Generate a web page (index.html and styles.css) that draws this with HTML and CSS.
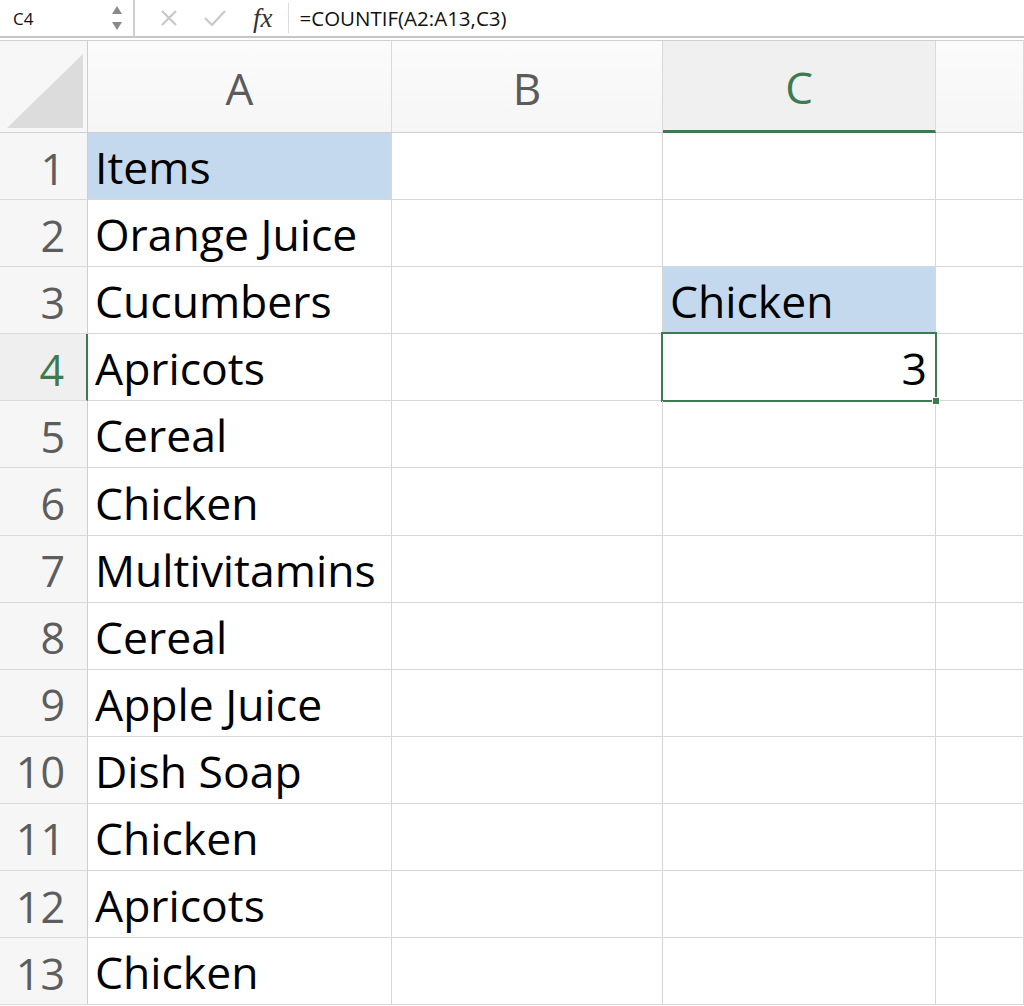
FILE: index.html
```html
<!DOCTYPE html>
<html>
<head>
<meta charset="utf-8">
<link rel="stylesheet" href="styles.css">
</head>
<body>
<div class="formula-bar">
  <div class="name-box">
    <span class="name">C4</span>
    <span class="spin">
      <svg width="12" height="30" viewBox="0 0 12 30"><path d="M6 3 L11 11 L1 11 Z" fill="#8a8a8a"/><path d="M1 19 L11 19 L6 27 Z" fill="#8a8a8a"/></svg>
    </span>
  </div>
  <div class="fb-tools">
    <svg class="tool" width="20" height="20" viewBox="0 0 20 20"><path d="M3 3 L17 17 M17 3 L3 17" stroke="#c8c8c8" stroke-width="2.2" fill="none"/></svg>
    <svg class="tool" width="24" height="20" viewBox="0 0 24 20"><path d="M2 10 L9 17 L22 3" stroke="#c8c8c8" stroke-width="2.2" fill="none"/></svg>
    <span class="fx">fx</span>
  </div>
  <div class="formula">=COUNTIF(A2:A13,C3)</div>
</div>
<div class="gap"></div>
<div class="sheet">
  <div class="corner"><svg width="80" height="80" viewBox="0 0 80 80"><path d="M80 6 L80 80 L4 80 Z" fill="#dcdcdc"/></svg></div>
  <div class="colh">A</div>
  <div class="colh">B</div>
  <div class="colh sel">C</div>
  <div class="colh"></div>

  <div class="rowh">1</div><div class="cell hl">Items</div><div class="cell"></div><div class="cell"></div><div class="cell"></div>
  <div class="rowh">2</div><div class="cell">Orange Juice</div><div class="cell"></div><div class="cell"></div><div class="cell"></div>
  <div class="rowh">3</div><div class="cell">Cucumbers</div><div class="cell"></div><div class="cell hl">Chicken</div><div class="cell"></div>
  <div class="rowh sel">4</div><div class="cell">Apricots</div><div class="cell"></div><div class="cell num active">3<span class="handle"></span></div><div class="cell"></div>
  <div class="rowh">5</div><div class="cell">Cereal</div><div class="cell"></div><div class="cell"></div><div class="cell"></div>
  <div class="rowh">6</div><div class="cell">Chicken</div><div class="cell"></div><div class="cell"></div><div class="cell"></div>
  <div class="rowh">7</div><div class="cell">Multivitamins</div><div class="cell"></div><div class="cell"></div><div class="cell"></div>
  <div class="rowh">8</div><div class="cell">Cereal</div><div class="cell"></div><div class="cell"></div><div class="cell"></div>
  <div class="rowh">9</div><div class="cell">Apple Juice</div><div class="cell"></div><div class="cell"></div><div class="cell"></div>
  <div class="rowh">10</div><div class="cell">Dish Soap</div><div class="cell"></div><div class="cell"></div><div class="cell"></div>
  <div class="rowh">11</div><div class="cell">Chicken</div><div class="cell"></div><div class="cell"></div><div class="cell"></div>
  <div class="rowh">12</div><div class="cell">Apricots</div><div class="cell"></div><div class="cell"></div><div class="cell"></div>
  <div class="rowh">13</div><div class="cell">Chicken</div><div class="cell"></div><div class="cell"></div><div class="cell"></div>
</div>
</body>
</html>
```
FILE: styles.css
```css
* { box-sizing: border-box; }
html, body { margin: 0; padding: 0; background: #fff; overflow: hidden; }
body { width: 1024px; height: 1006px; font-family: "Open Sans", "Lato", sans-serif; }

.formula-bar {
  height: 38px;
  display: flex;
  align-items: center;
  border-bottom: 2px solid #c6c6c6;
  background: #fff;
}
.name-box {
  width: 135px;
  height: 38px;
  display: flex;
  align-items: center;
  justify-content: space-between;
  padding: 0 10px 0 13px;
  border-right: 2px solid #cfcfcf;
}
.name { font-size: 17px; color: #111; }
.spin { display: flex; align-items: center; }
.fb-tools {
  display: flex;
  align-items: center;
  gap: 24px;
  padding-left: 24px;
  height: 30px;
  padding-right: 15px;
  border-right: 1px solid #dcdcdc;
}
.fx {
  font-family: "Liberation Serif", serif;
  font-style: italic;
  font-size: 27px;
  color: #333;
  margin-left: 2px;
}
.formula {
  padding-left: 11px;
  font-size: 20.5px;
  color: #111;
}
.gap { height: 3px; border-bottom: 1px solid #d0d0d0; }

.sheet {
  display: grid;
  grid-template-columns: 88px 304px 271px 273px 88px;
  grid-template-rows: 92px repeat(13, 67.1px);
}
.corner {
  background: #f7f7f7;
  border-right: 1px solid #cfcfcf;
  border-bottom: 1px solid #cfcfcf;
  display: flex;
  align-items: flex-end;
  justify-content: flex-end;
  padding: 0 4px 4px 0;
}
.colh {
  background: linear-gradient(#fbfbfb, #f6f6f6);
  border-right: 1px solid #dadada;
  border-bottom: 1px solid #cfcfcf;
  display: flex;
  align-items: center;
  justify-content: center;
  font-size: 44px;
  color: #5b5b5b;
  padding-top: 2px;
}
.colh.sel {
  background: #f0f0f0;
  color: #3d7a4f;
  border-bottom: 3px solid #3d7a4f;
}
.rowh {
  background: #f6f6f6;
  border-right: 1px solid #cfcfcf;
  border-bottom: 1px solid #dadada;
  display: flex;
  align-items: center;
  justify-content: flex-end;
  padding-right: 22px;
  font-size: 43px;
  color: #5d5d5d;
  padding-top: 4px;
}
.rowh.sel {
  background: #efefef;
  color: #3d7a4f;
  border-right: 2px solid #3d7a4f;
}
.cell {
  border-right: 1px solid #d6d6d6;
  border-bottom: 1px solid #d6d6d6;
  display: flex;
  align-items: center;
  padding: 1px 0 0 7px;
  font-size: 44.5px;
  color: #000;
  white-space: nowrap;
  position: relative;
}
.cell.hl { background: #c5d9ee; }
.cell.num { justify-content: flex-end; padding-right: 8px; }
.cell.active::after {
  content: "";
  position: absolute;
  left: -2px; top: -2px; right: -2px; bottom: -2px;
  border: 2px solid #3d7a4f;
  pointer-events: none;
}
.handle {
  position: absolute;
  right: -5px;
  bottom: -5px;
  width: 8px;
  height: 8px;
  background: #3d7a4f;
  border: 1px solid #fff;
  z-index: 2;
}
```
